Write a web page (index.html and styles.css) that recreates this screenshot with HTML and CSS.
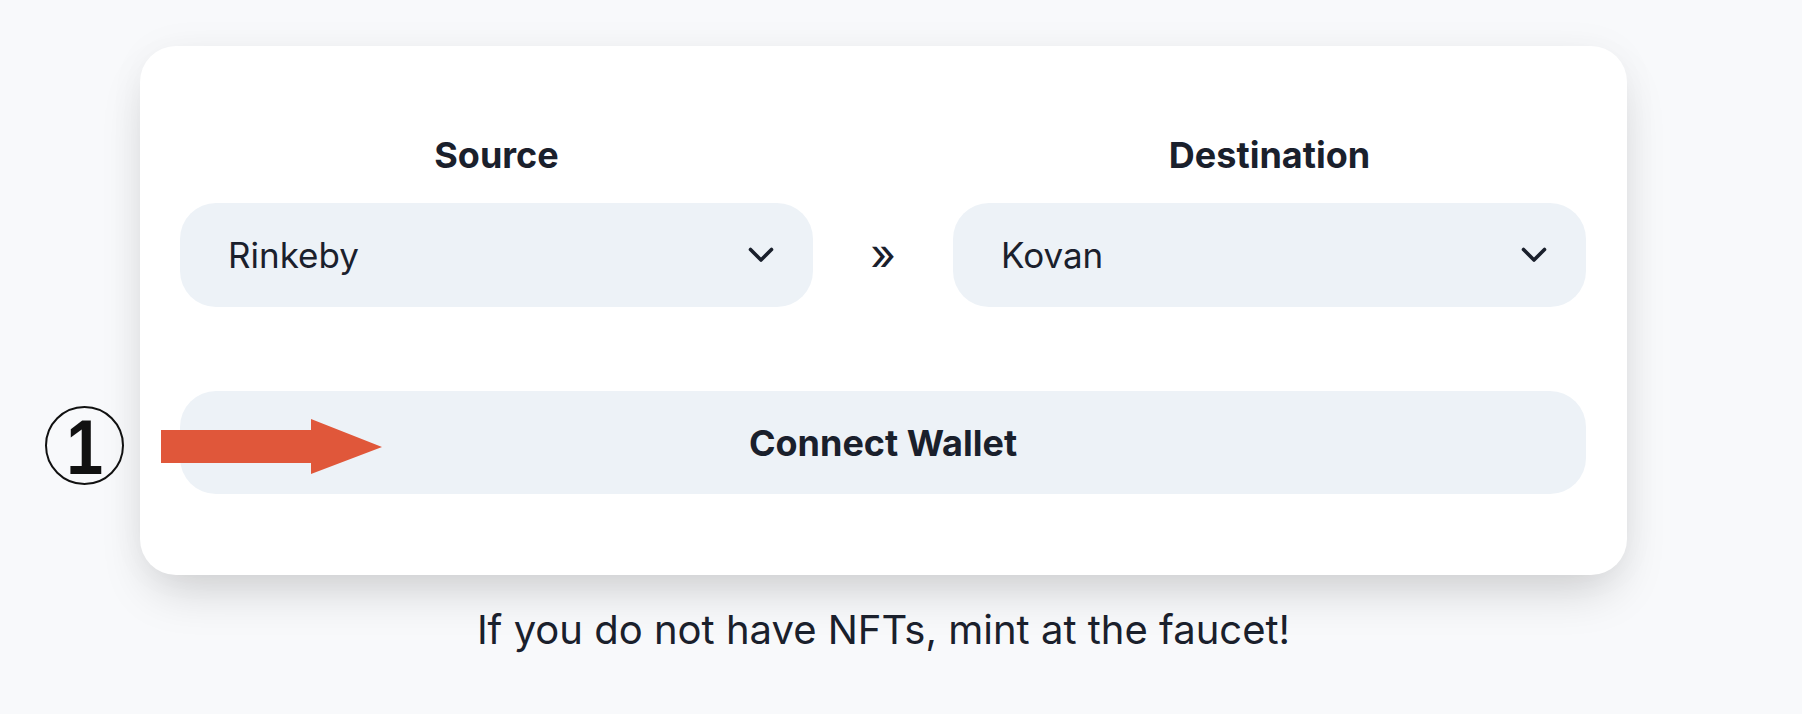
FILE: index.html
```html
<!DOCTYPE html>
<html lang="en">
<head>
<meta charset="utf-8">
<title>Bridge</title>
<link rel="stylesheet" href="styles.css">
</head>
<body>
<div class="page">
  <div class="card">
    <div class="row labels">
      <div class="label">Source</div>
      <div></div>
      <div class="label">Destination</div>
    </div>
    <div class="row selects">
      <div class="select">
        <span>Rinkeby</span>
        <svg class="chev" width="26" height="16" viewBox="0 0 26 16"><path d="M2.5 2.5 L13 13 L23.5 2.5" fill="none" stroke="#1a202c" stroke-width="3.6" stroke-linecap="round" stroke-linejoin="round"/></svg>
      </div>
      <div class="sep">»</div>
      <div class="select">
        <span>Kovan</span>
        <svg class="chev" width="26" height="16" viewBox="0 0 26 16"><path d="M2.5 2.5 L13 13 L23.5 2.5" fill="none" stroke="#1a202c" stroke-width="3.6" stroke-linecap="round" stroke-linejoin="round"/></svg>
      </div>
    </div>
    <button class="connect">Connect Wallet</button>
  </div>
  <p class="hint">If you do not have NFTs, mint at the faucet!</p>

  <div class="step"><span class="digit">1</span></div>
  <svg class="arrow" width="222" height="56" viewBox="0 0 222 56"><polygon points="0,11 150,11 150,0 221,28 150,55 150,44 0,44" fill="#e0573a"/></svg>
</div>
</body>
</html>
```
FILE: styles.css
```css
* { box-sizing: border-box; }
html, body { margin: 0; padding: 0; }
body {
  background: #f8f9fb;
  font-family: Inter, "Noto Sans", sans-serif;
  color: #1a202c;
  width: 1802px;
  height: 714px;
  overflow: hidden;
}
.page {
  position: relative;
  padding: 46px 0 0 140px;
}
.card {
  width: 1487px;
  height: 529px;
  background: #fff;
  border-radius: 36px;
  padding: 87px 41px 0 40px;
  box-shadow: 0 24px 50px -12px rgba(0,0,0,0.18), 0 0 40px rgba(0,0,0,0.035);
}
.row {
  display: grid;
  grid-template-columns: 1fr 140px 1fr;
}
.label {
  text-align: center;
  font-size: 36px;
  font-weight: 700;
  line-height: 44px;
}
.selects { margin-top: 26px; }
.select {
  height: 104px;
  background: #edf2f7;
  border-radius: 36px;
  display: flex;
  align-items: center;
  justify-content: space-between;
  padding: 0 39px 0 48px;
  font-size: 35px;
}
.chev { display: block; }
.sep {
  display: flex;
  align-items: center;
  justify-content: center;
  font-size: 44px;
  font-weight: 400;
  padding-bottom: 2px;
}
.connect {
  display: block;
  width: 100%;
  height: 103px;
  margin-top: 84px;
  border: 0;
  border-radius: 36px;
  background: #edf2f7;
  font-family: Inter, "Noto Sans", sans-serif;
  font-size: 36px;
  font-weight: 650;
  color: #1a202c;
}
.hint {
  margin: 31px 0 0 0;
  width: 1487px;
  text-align: center;
  font-size: 40px;
  line-height: 48px;
}
.step {
  position: absolute;
  left: 45px;
  top: 406px;
  width: 79px;
  height: 79px;
  border: 2.5px solid #111;
  border-radius: 50%;
  display: flex;
  align-items: center;
  justify-content: center;
  font-family: "Liberation Sans", Arial, sans-serif;
  font-weight: 700;
  font-size: 78px;
  line-height: 1;
  color: #111;
  padding-top: 3px;
}
.digit {
  display: block;
  transform: scaleX(0.85);
}
.arrow {
  position: absolute;
  left: 161px;
  top: 419px;
}
```
